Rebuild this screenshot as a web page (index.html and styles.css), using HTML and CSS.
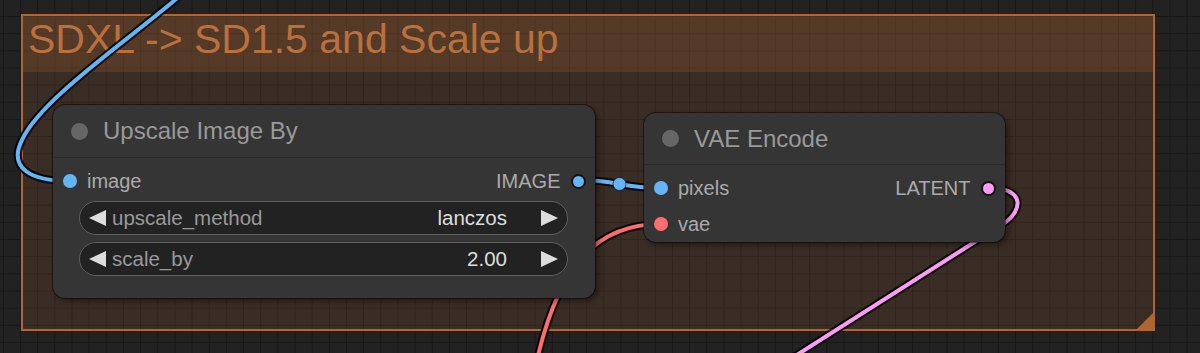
FILE: index.html
```html
<!DOCTYPE html>
<html>
<head>
<meta charset="utf-8">
<link rel="stylesheet" href="styles.css">
</head>
<body>
<div class="canvas">
  <div class="group">
    <div class="group-title">SDXL -&gt; SD1.5 and Scale up</div>
    <div class="group-corner"></div>
  </div>

  <svg class="wires" width="1200" height="353" viewBox="0 0 1200 353">
    <g class="wire wire-image">
      <path class="wire-shadow" d="M 193 -15 L 175 0 C 128 40, 40 100, 22 140 C 8 168, 30 181, 70 181"/>
      <path class="wire-line" d="M 193 -15 L 175 0 C 128 40, 40 100, 22 140 C 8 168, 30 181, 70 181"/>
    </g>
    <g class="wire wire-image">
      <path class="wire-shadow" d="M 578 180 C 620 180, 619 188, 661 188"/>
      <path class="wire-line" d="M 578 180 C 620 180, 619 188, 661 188"/>
      <circle class="wire-mid" cx="619.5" cy="184" r="6.5"/>
    </g>
    <g class="wire wire-vae">
      <path class="wire-shadow" d="M 661 224 C 600 224, 560 260, 537 360"/>
      <path class="wire-line" d="M 661 224 C 600 224, 560 260, 537 360"/>
    </g>
    <g class="wire wire-latent">
      <path class="wire-shadow" d="M 988 188 C 1025 188, 1024 210, 1003 224 L 770 372"/>
      <path class="wire-line" d="M 988 188 C 1025 188, 1024 210, 1003 224 L 770 372"/>
    </g>
  </svg>

  <div class="node node-upscale">
    <div class="node-header">
      <span class="node-dot"></span>
      <span class="node-title">Upscale Image By</span>
    </div>
    <div class="node-body">
      <div class="slot-row">
        <div class="slot slot-in"><span class="slot-dot c-image"></span><span class="slot-label">image</span></div>
        <div class="slot slot-out"><span class="slot-label">IMAGE</span><span class="slot-dot out c-image"></span></div>
      </div>
      <div class="widgets">
        <div class="widget">
          <span class="arrow arrow-left"></span>
          <span class="w-label">upscale_method</span>
          <span class="w-value">lanczos</span>
          <span class="arrow arrow-right"></span>
        </div>
        <div class="widget">
          <span class="arrow arrow-left"></span>
          <span class="w-label">scale_by</span>
          <span class="w-value">2.00</span>
          <span class="arrow arrow-right"></span>
        </div>
      </div>
    </div>
  </div>

  <div class="node node-vae">
    <div class="node-header header-short">
      <span class="node-dot"></span>
      <span class="node-title">VAE Encode</span>
    </div>
    <div class="node-body body-flush">
      <div class="slot-row">
        <div class="slot slot-in"><span class="slot-dot c-image"></span><span class="slot-label">pixels</span></div>
        <div class="slot slot-out"><span class="slot-label">LATENT</span><span class="slot-dot out c-latent"></span></div>
      </div>
      <div class="slot-row">
        <div class="slot slot-in"><span class="slot-dot c-vae"></span><span class="slot-label">vae</span></div>
      </div>
    </div>
  </div>
</div>
</body>
</html>
```

FILE: styles.css
```css
* { box-sizing: border-box; }

html, body {
  margin: 0;
  padding: 0;
}

body {
  width: 1200px;
  height: 353px;
  overflow: hidden;
  background: #222222;
  font-family: "Liberation Sans", Arial, sans-serif;
}

.canvas {
  position: relative;
  width: 1200px;
  height: 353px;
  overflow: hidden;
  background-color: #222222;
  background-image:
    linear-gradient(to right, #181818 1px, transparent 1px),
    linear-gradient(to bottom, #181818 1px, transparent 1px);
  background-size: 17.17px 17.17px;
  background-position: 20px 16px;
}

/* ---------- group ---------- */
.group {
  position: absolute;
  left: 21px;
  top: 14px;
  width: 1134px;
  height: 317px;
  border: 2px solid #b06634;
  background: rgba(176, 102, 52, 0.17);
}

.group-title {
  height: 56px;
  padding-left: 5px;
  background: rgba(176, 102, 52, 0.24);
  color: #b8703f;
  font-size: 41px;
  line-height: 47px;
  white-space: nowrap;
}

.group-corner {
  position: absolute;
  right: 0;
  bottom: 0;
  width: 16px;
  height: 16px;
  background: #b06634;
  clip-path: polygon(100% 0, 100% 100%, 0 100%);
}

/* ---------- wires ---------- */
.wires {
  position: absolute;
  left: 0;
  top: 0;
}

.wire path {
  fill: none;
  stroke-linecap: round;
  stroke-linejoin: round;
}

.wire-shadow {
  stroke: rgba(0, 0, 0, 0.85);
  stroke-width: 8;
}

.wire-line {
  stroke-width: 4;
}

.wire-image .wire-line { stroke: #64b5f6; }
.wire-vae .wire-line { stroke: #ff6e6e; }
.wire-latent .wire-line { stroke: #ff9cf9; }

.wire-mid {
  fill: #64b5f6;
  stroke: rgba(0, 0, 0, 0.6);
  stroke-width: 1;
}

/* ---------- nodes ---------- */
.node {
  position: absolute;
  background: #353535;
  border-radius: 12px;
  box-shadow: 0 0 0 1px rgba(0, 0, 0, 0.45), 3px 3px 6px rgba(0, 0, 0, 0.45);
  color: #aaaaaa;
}

.node-upscale {
  left: 53px;
  top: 105px;
  width: 542px;
}

.node-vae {
  left: 644px;
  top: 113px;
  width: 361px;
}

.node-header {
  height: 53px;
  display: flex;
  align-items: center;
  gap: 15px;
  padding-left: 18px;
  border-bottom: 1px solid #2a2a2a;
}

.header-short {
  height: 52px;
}

.node-dot {
  width: 17px;
  height: 17px;
  border-radius: 50%;
  background: #666666;
  flex: none;
}

.node-title {
  font-size: 24px;
  color: #999999;
  white-space: nowrap;
}

.node-body {
  padding: 5px 0 22px;
}

.body-flush {
  padding-bottom: 0;
}

.slot-row {
  height: 36px;
  display: flex;
  justify-content: space-between;
  align-items: center;
}

.slot {
  display: flex;
  align-items: center;
  font-size: 20px;
  color: #aaaaaa;
  white-space: nowrap;
}

.slot-in {
  padding-left: 10px;
  gap: 10px;
}

.slot-out {
  padding-right: 9.5px;
  gap: 10px;
}

.slot-dot {
  width: 14px;
  height: 14px;
  border-radius: 50%;
  flex: none;
}

.slot-dot.out {
  width: 15px;
  height: 15px;
  border: 2px solid #151515;
}

.c-image { background: #64b5f6; }
.c-vae { background: #ff6e6e; }
.c-latent { background: #ff9cf9; }

/* ---------- widgets ---------- */
.widgets {
  display: flex;
  flex-direction: column;
  gap: 7px;
  padding: 2px 27px 0 26px;
}

.widget {
  height: 34px;
  display: flex;
  align-items: center;
  padding: 0 9px;
  border: 1.5px solid #5e5e5e;
  border-radius: 17px;
  background: #222222;
  font-size: 20.5px;
  white-space: nowrap;
}

.arrow {
  width: 0;
  height: 0;
  flex: none;
  border-top: 8.5px solid transparent;
  border-bottom: 8.5px solid transparent;
}

.arrow-left {
  border-right: 17px solid #dddddd;
}

.arrow-right {
  border-left: 17px solid #dddddd;
}

.w-label {
  flex: 1;
  margin-left: 6px;
  color: #999999;
}

.w-value {
  margin-right: 34px;
  color: #dddddd;
}
```
